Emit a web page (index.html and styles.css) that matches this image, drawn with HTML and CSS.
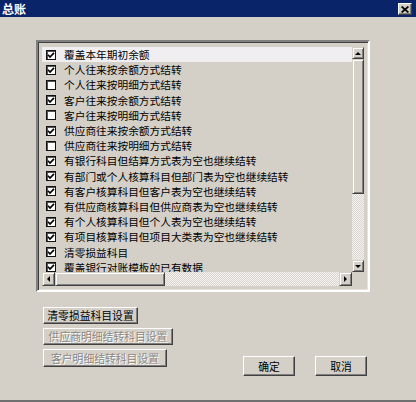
FILE: index.html
```html
<!DOCTYPE html>
<html lang="zh-CN">
<head>
<meta charset="utf-8">
<title>总账</title>
<link rel="stylesheet" href="styles.css">
</head>
<body>
<div class="window">
  <div class="titlebar">
    <span class="title">总账</span>
    <span class="close"><svg width="8" height="7" viewBox="0 0 8 7"><path d="M0.6 0.5 L7.4 6.5 M7.4 0.5 L0.6 6.5" stroke="#000" stroke-width="1.7" fill="none"/></svg></span>
  </div>
  <div class="content">
    <div class="frame">
      <div class="list">
        <div class="rows-area">
          <div class="rows">
            <div class="row selected"><span class="cb"><svg width="8" height="8" viewBox="0 0 8 8"><path d="M1 3.8 L3 6 L7 1.8" stroke="#000" stroke-width="1.7" fill="none"/></svg></span><span>覆盖本年期初余额</span></div>
            <div class="row"><span class="cb"><svg width="8" height="8" viewBox="0 0 8 8"><path d="M1 3.8 L3 6 L7 1.8" stroke="#000" stroke-width="1.7" fill="none"/></svg></span><span>个人往来按余额方式结转</span></div>
            <div class="row"><span class="cb"></span><span>个人往来按明细方式结转</span></div>
            <div class="row"><span class="cb"><svg width="8" height="8" viewBox="0 0 8 8"><path d="M1 3.8 L3 6 L7 1.8" stroke="#000" stroke-width="1.7" fill="none"/></svg></span><span>客户往来按余额方式结转</span></div>
            <div class="row"><span class="cb"></span><span>客户往来按明细方式结转</span></div>
            <div class="row"><span class="cb"><svg width="8" height="8" viewBox="0 0 8 8"><path d="M1 3.8 L3 6 L7 1.8" stroke="#000" stroke-width="1.7" fill="none"/></svg></span><span>供应商往来按余额方式结转</span></div>
            <div class="row"><span class="cb"></span><span>供应商往来按明细方式结转</span></div>
            <div class="row"><span class="cb"><svg width="8" height="8" viewBox="0 0 8 8"><path d="M1 3.8 L3 6 L7 1.8" stroke="#000" stroke-width="1.7" fill="none"/></svg></span><span>有银行科目但结算方式表为空也继续结转</span></div>
            <div class="row"><span class="cb"><svg width="8" height="8" viewBox="0 0 8 8"><path d="M1 3.8 L3 6 L7 1.8" stroke="#000" stroke-width="1.7" fill="none"/></svg></span><span>有部门或个人核算科目但部门表为空也继续结转</span></div>
            <div class="row"><span class="cb"><svg width="8" height="8" viewBox="0 0 8 8"><path d="M1 3.8 L3 6 L7 1.8" stroke="#000" stroke-width="1.7" fill="none"/></svg></span><span>有客户核算科目但客户表为空也继续结转</span></div>
            <div class="row"><span class="cb"><svg width="8" height="8" viewBox="0 0 8 8"><path d="M1 3.8 L3 6 L7 1.8" stroke="#000" stroke-width="1.7" fill="none"/></svg></span><span>有供应商核算科目但供应商表为空也继续结转</span></div>
            <div class="row"><span class="cb"><svg width="8" height="8" viewBox="0 0 8 8"><path d="M1 3.8 L3 6 L7 1.8" stroke="#000" stroke-width="1.7" fill="none"/></svg></span><span>有个人核算科目但个人表为空也继续结转</span></div>
            <div class="row"><span class="cb"><svg width="8" height="8" viewBox="0 0 8 8"><path d="M1 3.8 L3 6 L7 1.8" stroke="#000" stroke-width="1.7" fill="none"/></svg></span><span>有项目核算科目但项目大类表为空也继续结转</span></div>
            <div class="row"><span class="cb"><svg width="8" height="8" viewBox="0 0 8 8"><path d="M1 3.8 L3 6 L7 1.8" stroke="#000" stroke-width="1.7" fill="none"/></svg></span><span>清零损益科目</span></div>
            <div class="row"><span class="cb"><svg width="8" height="8" viewBox="0 0 8 8"><path d="M1 3.8 L3 6 L7 1.8" stroke="#000" stroke-width="1.7" fill="none"/></svg></span><span>覆盖银行对账模板的已有数据</span></div>
          </div>
          <div class="vscroll">
            <div class="sbtn"><i class="arrow up"></i></div>
            <div class="vthumb"></div>
            <div class="track"></div>
            <div class="sbtn"><i class="arrow down"></i></div>
          </div>
        </div>
        <div class="hscroll-row">
          <div class="hscroll">
            <div class="sbtn hbtn"><i class="arrow left"></i></div>
            <div class="hthumb"></div>
            <div class="track"></div>
            <div class="sbtn hbtn"><i class="arrow right"></i></div>
          </div>
          <div class="corner"></div>
        </div>
      </div>
    </div>
    <div class="bottom">
      <div class="left-col">
        <button class="btn w-clear">清零损益科目设置</button>
        <button class="btn w-supplier" disabled>供应商明细结转科目设置</button>
        <button class="btn w-customer" disabled>客户明细结转科目设置</button>
      </div>
      <div class="right-group">
        <button class="btn dlg">确定</button>
        <button class="btn dlg">取消</button>
      </div>
    </div>
  </div>
</div>
</body>
</html>
```
FILE: styles.css
```css
* { box-sizing: border-box; }
html, body { margin: 0; padding: 0; }
body {
  width: 416px;
  height: 402px;
  overflow: hidden;
  background: #d4d0c8;
  font-family: "Noto Sans CJK SC", "Noto Sans", sans-serif;
}
.window {
  height: 402px;
  border-bottom: 2px solid #707070;
  display: flex;
  flex-direction: column;
}
.titlebar {
  height: 17px;
  flex: none;
  background: #0a246a;
  display: flex;
  align-items: center;
  justify-content: space-between;
  padding: 0 4px 0 2px;
}
.title {
  color: #fff;
  font-weight: bold;
  font-size: 12px;
  line-height: 17px;
}
.close {
  width: 14px;
  height: 12px;
  margin-top: 1px;
  background: #d4d0c8;
  border: 1px solid;
  border-color: #fff #404040 #404040 #fff;
  box-shadow: inset -1px -1px #808080;
  display: flex;
  align-items: center;
  justify-content: center;
}
.content {
  padding: 23px 0 0 36px;
}
.frame {
  width: 334px;
  height: 252px;
  border: 2px solid;
  border-color: #808080 #fff #fff #808080;
  box-shadow: inset 1px 1px #404040, inset -1px -1px #e4e2de;
  padding: 5px 4px 4px 4px;
}
.list {
  height: 100%;
  display: flex;
  flex-direction: column;
}
.rows-area {
  flex: 1;
  min-height: 0;
  display: flex;
}
.rows {
  flex: 1;
  overflow: hidden;
}
.row {
  height: 15.2px;
  display: flex;
  align-items: center;
  padding-left: 4px;
  font-size: 10.7px;
  line-height: 15px;
  color: #000;
  white-space: nowrap;
}
.row.selected {
  background: #f0eef1;
}
.cb {
  width: 10px;
  height: 10px;
  flex: none;
  margin-right: 8px;
  background: #fff;
  border: 1px solid #111;
  box-shadow: inset 1px 1px #555;
  display: flex;
  align-items: center;
  justify-content: center;
}
.vscroll {
  width: 12px;
  flex: none;
  display: flex;
  flex-direction: column;
}
.sbtn {
  width: 12px;
  height: 12px;
  flex: none;
  background: #d4d0c8;
  border: 1px solid;
  border-color: #d4d0c8 #404040 #404040 #d4d0c8;
  box-shadow: inset 1px 1px #fff, inset -1px -1px #808080;
  display: flex;
  align-items: center;
  justify-content: center;
}
.hbtn {
  width: 13px;
  height: 14px;
}
.vthumb {
  height: 135px;
  flex: none;
  background: #d4d0c8;
  border: 1px solid;
  border-color: #d4d0c8 #404040 #404040 #d4d0c8;
  box-shadow: inset 1px 1px #fff, inset -1px -1px #808080;
}
.track {
  flex: 1;
  background: repeating-conic-gradient(#f4f3f1 0 25%, #d8d5cf 0 50%) 0 0 / 2px 2px;
}
.hscroll-row {
  height: 14px;
  flex: none;
  display: flex;
}
.hscroll {
  flex: 1;
  display: flex;
}
.hthumb {
  width: 110px;
  flex: none;
  background: #d4d0c8;
  border: 1px solid;
  border-color: #d4d0c8 #404040 #404040 #d4d0c8;
  box-shadow: inset 1px 1px #fff, inset -1px -1px #808080;
}
.corner {
  width: 12px;
  flex: none;
  background: #d4d0c8;
}
.arrow {
  width: 0;
  height: 0;
  display: block;
}
.arrow.up { border-left: 3px solid transparent; border-right: 3px solid transparent; border-bottom: 3px solid #000; }
.arrow.down { border-left: 3px solid transparent; border-right: 3px solid transparent; border-top: 3px solid #000; }
.arrow.left { border-top: 3px solid transparent; border-bottom: 3px solid transparent; border-right: 3px solid #000; }
.arrow.right { border-top: 3px solid transparent; border-bottom: 3px solid transparent; border-left: 3px solid #000; }
.bottom {
  display: flex;
  padding: 15px 0 0 7px;
}
.left-col {
  width: 200px;
  flex: none;
  display: flex;
  flex-direction: column;
  align-items: flex-start;
  gap: 4px;
}
.btn {
  height: 17px;
  padding: 0;
  font-family: inherit;
  font-size: 10.8px;
  line-height: 15px;
  color: #000;
  background: #d4d0c8;
  border: 1px solid;
  border-color: #fff #404040 #404040 #fff;
  box-shadow: inset -1px -1px #808080;
  border-radius: 0;
}
.btn:disabled {
  color: #8a8884;
  text-shadow: 1px 1px #fff;
}
.w-clear { width: 95px; }
.w-supplier { width: 130px; }
.w-customer { width: 124px; height: 18px; }
.right-group {
  display: flex;
  gap: 20px;
  margin-top: 49px;
}
.dlg {
  width: 52px;
  height: 20px;
}
```
